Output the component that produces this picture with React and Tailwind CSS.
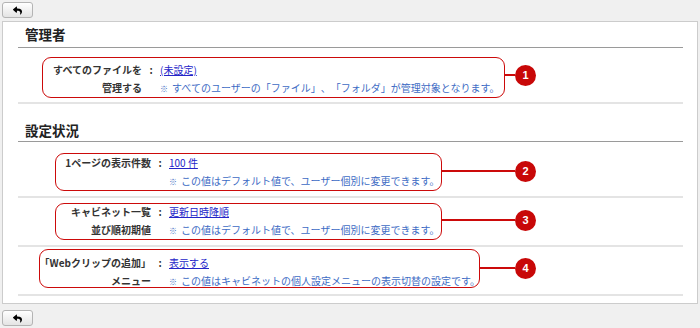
import React from "react";
import { FaReply } from "react-icons/fa";

function BackBtn() {
  return (
    <button className="w-[31px] h-[16px] rounded-[3px] border border-[#b4b4b4] bg-gradient-to-b from-white to-[#e4e4e4] flex items-center justify-center text-black">
      <FaReply size={9} />
    </button>
  );
}

function Annot({ left, top, w, h, cy, n }) {
  return (
    <>
      <div
        className="absolute border-[1.5px] border-[#cc0a0a] rounded-[9px] pointer-events-none"
        style={{ left, top, width: w, height: h }}
      />
      <div
        className="absolute h-[1.5px] bg-[#cc0a0a]"
        style={{ left: left + w, top: cy - 0.75, width: 497 - (left + w) }}
      />
      <div
        className="absolute w-[21px] h-[21px] rounded-full bg-[#c80808] text-white text-[11px] font-bold flex items-center justify-center font-['Liberation_Sans',sans-serif]"
        style={{ left: 497, top: cy - 10.5 }}
      >
        {n}
      </div>
    </>
  );
}

function Row({ h, pt, labelW, label1, label2, value, note, annot }) {
  return (
    <div
      className="relative border-b-2 border-[#e4e4e4] box-border"
      style={{ height: h, paddingTop: pt }}
    >
      <div
        className="grid text-[10px] leading-[18px] [text-spacing-trim:space-all]"
        style={{ gridTemplateColumns: `${labelW}px 18px 1fr` }}
      >
        <div className="text-right font-bold text-[#333]">{label1}</div>
        <div className="text-center text-[#333] font-bold">:</div>
        <div>
          <span className="text-[#2424c8] underline">{value}</span>
        </div>
        <div className="text-right font-bold text-[#333]">{label2}</div>
        <div></div>
        <div className="text-[#3d6bc4] whitespace-nowrap">
          <span className="text-[8px] mr-[4px]">※</span>
          {note}
        </div>
      </div>
      <Annot {...annot} />
    </div>
  );
}

export default function App() {
  return (
    <div className="w-[700px] h-[328px] bg-[#f0f0f0] font-['Noto_Sans_CJK_JP','Noto_Sans',sans-serif] overflow-hidden">
      <div className="h-[21px] pt-[2px] pl-[2px]">
        <BackBtn />
      </div>
      <div className="ml-[2px] w-[696px] h-[283px] bg-white border border-[#cccccc] pl-[15px] pr-[14px]">
        <div className="h-[26px] border-b border-[#9a9a9a] pl-[7px] flex items-center pb-[1px]">
          <h2 className="text-[13.5px] font-bold text-[#222] leading-[18px]">管理者</h2>
        </div>
        <Row
          h={56}
          pt={13}
          labelW={124}
          label1="すべてのファイルを"
          label2="管理する"
          value="(未設定)"
          note="すべてのユーザーの「ファイル」、「フォルダ」が管理対象となります。"
          annot={{ left: 24, top: 9, w: 463, h: 41, cy: 27, n: 1 }}
        />
        <div className="h-[38px] border-b border-[#9a9a9a] pl-[7px] flex items-end pb-[2px]">
          <h2 className="text-[13.5px] font-bold text-[#222] leading-[18px]">設定状況</h2>
        </div>
        <Row
          h={56}
          pt={12}
          labelW={133}
          label1="1ページの表示件数"
          label2=""
          value="100 件"
          note="この値はデフォルト値で、ユーザー個別に変更できます。"
          annot={{ left: 37, top: 11, w: 387, h: 38, cy: 29, n: 2 }}
        />
        <Row
          h={49}
          pt={5}
          labelW={133}
          label1="キャビネット一覧"
          label2="並び順初期値"
          value="更新日時降順"
          note="この値はデフォルト値で、ユーザー個別に変更できます。"
          annot={{ left: 37, top: 5, w: 387, h: 37, cy: 22, n: 3 }}
        />
        <Row
          h={49}
          pt={7}
          labelW={133}
          label1="「Webクリップの追加」"
          label2="メニュー"
          value="表示する"
          note="この値はキャビネットの個人設定メニューの表示切替の設定です。"
          annot={{ left: 21, top: 2, w: 441, h: 39, cy: 21, n: 4 }}
        />
      </div>
      <div className="pt-[6px] pl-[2px]">
        <BackBtn />
      </div>
    </div>
  );
}
